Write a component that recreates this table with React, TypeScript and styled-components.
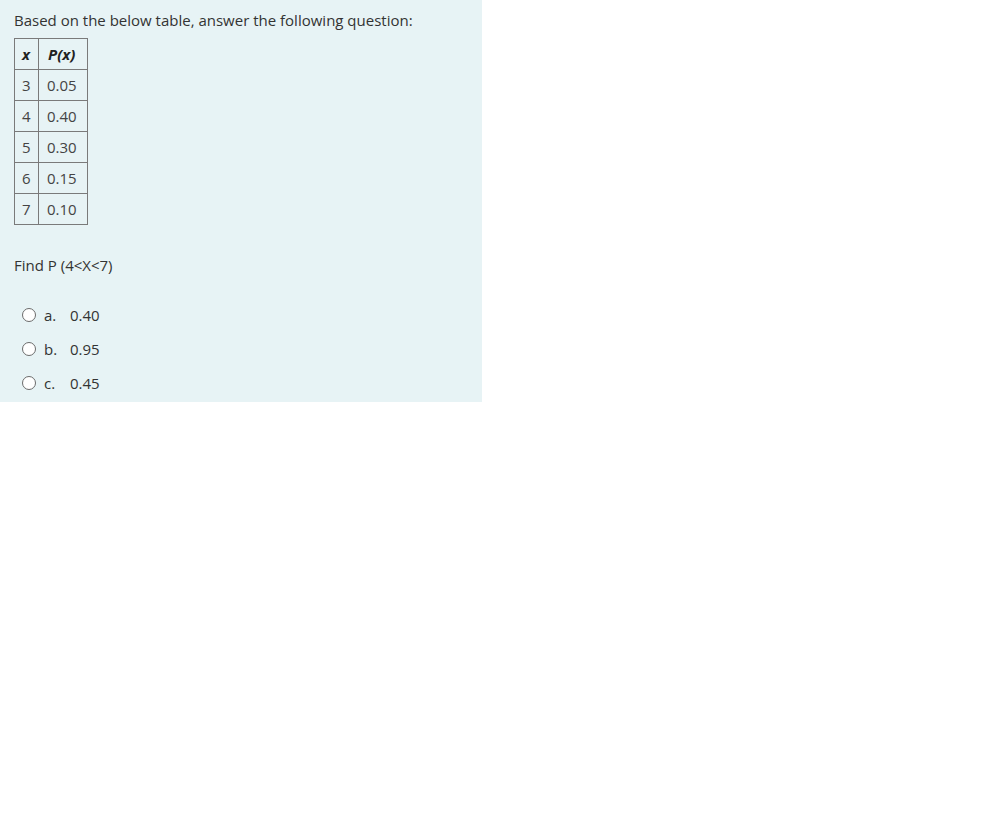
import React from "react";
import styled, { createGlobalStyle } from "styled-components";

const Global = createGlobalStyle`
  html, body { margin: 0; padding: 0; background: #fff; }
  body { font-family: "Open Sans", "Liberation Sans", sans-serif; }
`;

const Panel = styled.div`
  width: 482px;
  height: 402px;
  box-sizing: border-box;
  background: #e7f3f5;
  padding: 10px 14px 0 14px;
  color: #333;
  font-size: 15px;
  line-height: 20px;
`;

const P = styled.p`
  margin: 0;
`;

const Table = styled.table`
  border-collapse: collapse;
  margin-top: 8px;
  font-size: 15px;
`;

const Th = styled.th<{ $narrow?: boolean }>`
  border: 1px solid #7a7a7a;
  height: 31px;
  box-sizing: border-box;
  padding: 0 0 0 ${(p) => (p.$narrow ? "7px" : "9px")};
  width: ${(p) => (p.$narrow ? "24px" : "49px")};
  font-weight: bold;
  font-style: italic;
  text-align: left;
  color: #222;
`;

const Td = styled.td<{ $narrow?: boolean }>`
  border: 1px solid #7a7a7a;
  height: 31px;
  box-sizing: border-box;
  padding: 0 0 0 ${(p) => (p.$narrow ? "7px" : "8px")};
  width: ${(p) => (p.$narrow ? "24px" : "49px")};
  color: #444;
`;

const Question = styled.p`
  margin: 30px 0 0 0;
`;

const Options = styled.div`
  margin-top: 30px;
  display: flex;
  flex-direction: column;
  gap: 14px;
`;

const Option = styled.label`
  display: flex;
  align-items: center;
  height: 20px;
  padding-left: 8px;
`;

const Radio = styled.span`
  width: 12px;
  height: 12px;
  border: 1px solid #6b6b6b;
  border-radius: 50%;
  background: #fff;
  box-sizing: content-box;
`;

const Letter = styled.span`
  margin-left: 8px;
  width: 26px;
`;

const rows = [
  ["3", "0.05"],
  ["4", "0.40"],
  ["5", "0.30"],
  ["6", "0.15"],
  ["7", "0.10"],
];

const opts = [
  ["a.", "0.40"],
  ["b.", "0.95"],
  ["c.", "0.45"],
];

export default function App() {
  return (
    <>
      <Global />
      <Panel>
        <P>Based on the below table, answer the following question:</P>
        <Table>
          <thead>
            <tr>
              <Th $narrow>x</Th>
              <Th>P(x)</Th>
            </tr>
          </thead>
          <tbody>
            {rows.map(([x, p]) => (
              <tr key={x}>
                <Td $narrow>{x}</Td>
                <Td>{p}</Td>
              </tr>
            ))}
          </tbody>
        </Table>
        <Question>Find P (4&lt;X&lt;7)</Question>
        <Options>
          {opts.map(([l, v]) => (
            <Option key={l}>
              <Radio />
              <Letter>{l}</Letter>
              <span>{v}</span>
            </Option>
          ))}
        </Options>
      </Panel>
    </>
  );
}
